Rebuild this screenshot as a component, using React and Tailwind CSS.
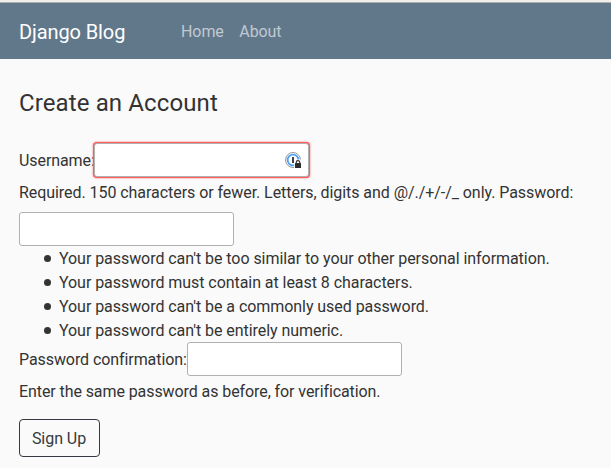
const passwordRules = [
  "Your password can't be too similar to your other personal information.",
  "Your password must contain at least 8 characters.",
  "Your password can't be a commonly used password.",
  "Your password can't be entirely numeric.",
];

const field = "h-[34px] w-[215px] shrink-0 rounded-[3px] border border-[#b0b0b0] bg-white outline-none";

function PasswordManagerIcon() {
  return (
    <svg className="mt-[2px]" width="18" height="18" viewBox="0 0 18 18" fill="none">
      <circle cx="8" cy="8" r="7.5" fill="#fff" stroke="#8f8f8f" strokeWidth="0.9" />
      <circle cx="8" cy="8" r="5.4" stroke="#4fa3f7" strokeWidth="1.9" />
      <path d="M7 5h2v6H7z" fill="#444" />
      <path d="M9.2 17V10.2h.9V7.6h5.8v2.6H18V17z" fill="#fff" />
      <path d="M11.2 12v-1.6a1.8 1.8 0 0 1 3.6 0V12" stroke="#2b2b2b" strokeWidth="1.1" />
      <rect x="10" y="11" width="6" height="5" rx="0.5" fill="#2b2b2b" />
    </svg>
  );
}

export default function App() {
  return (
    <div className="h-[468px] w-full overflow-hidden bg-[#fafafa] font-['Roboto',sans-serif] text-base leading-6 tracking-[-0.055px] text-[#333]">
      <div className="h-[3px] border-b border-[#b3afaf] bg-[#efefee]" />
      <nav className="flex h-14 items-center bg-[#61788b] pt-[2px] pl-[19px]">
        <a className="w-[162px] text-[20px] leading-[30px] tracking-[-0.1px] text-white">Django Blog</a>
        <div className="flex gap-[15.5px] tracking-[-0.07px] text-[#c0c9d1]">
          <a>Home</a>
          <a>About</a>
        </div>
      </nav>
      <main className="pl-[19px] pt-[30px]">
        <h1 className="text-[24px] leading-[29px] tracking-[0.12px]">Create an Account</h1>
        <form className="mt-[25px]">
          <div className="flex h-[34px] items-center">
            <label className="w-[75px] shrink-0 whitespace-nowrap pt-[2px] tracking-[-0.08px]">Username:</label>
            <div className={`${field} flex items-center justify-end pr-[5px] shadow-[0_0_0_1px_#ff5c5c,0_0_2px_1px_#ff6060]`}>
              <PasswordManagerIcon />
            </div>
          </div>
          <p className="mt-1 whitespace-nowrap">
            Required. 150 characters or fewer. Letters, digits and @/./+/-/_ only. Password:
          </p>
          <input type="password" className={`${field} mt-[7px] block`} />
          <ul className="-mb-px mt-px pl-[25px]">
            {passwordRules.map((rule) => (
              <li key={rule} className="flex items-center gap-2 whitespace-nowrap">
                <span className="mb-[2px] h-[7px] w-[7px] shrink-0 rounded-full bg-[#333]" />
                {rule}
              </li>
            ))}
          </ul>
          <div className="flex h-[34px] items-center">
            <label className="w-[168px] shrink-0 whitespace-nowrap pt-[2px] tracking-[-0.08px]">Password confirmation:</label>
            <input type="password" className={field} />
          </div>
          <p className="mt-1 tracking-[-0.085px]">Enter the same password as before, for verification.</p>
          <button
            type="button"
            className="mt-[15px] block h-[38px] w-[81px] rounded border border-[#343a40] pt-[2px] pr-px text-[#343a40]"
          >
            Sign Up
          </button>
        </form>
      </main>
    </div>
  );
}
